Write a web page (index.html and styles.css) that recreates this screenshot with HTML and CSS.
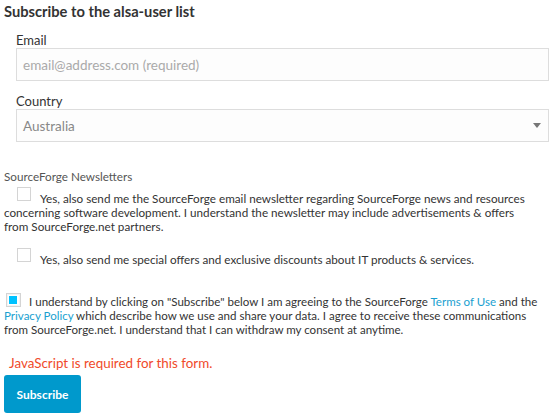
FILE: index.html
```html
<!DOCTYPE html>
<html>
<head>
<meta charset="utf-8">
<link rel="stylesheet" href="styles.css">
</head>
<body>
<form class="form">
  <h1 class="title">Subscribe to the alsa-user list</h1>
  <div class="fields">
    <label class="field-label" for="email">Email</label>
    <input class="text-input" id="email" type="text" placeholder="email@address.com (required)">
    <label class="field-label country-label" for="country">Country</label>
    <div class="select">
      <span class="select-value">Australia</span>
      <span class="select-arrow"></span>
    </div>
  </div>
  <div class="newsletters">
    <div class="group-label">SourceForge Newsletters</div>
    <p class="opt opt-first"><span class="box"></span>Yes, also send me the SourceForge email newsletter regarding SourceForge news and resources concerning software development. I understand the newsletter may include advertisements &amp; offers from SourceForge.net partners.</p>
    <p class="opt opt-second"><span class="box"></span>Yes, also send me special offers and exclusive discounts about IT products &amp; services.</p>
  </div>
  <p class="consent"><span class="box box-checked"></span>I understand by clicking on "Subscribe" below I am agreeing to the SourceForge <a class="link" href="#">Terms of Use</a> and the <a class="link" href="#">Privacy Policy</a> which describe how we use and share your data. I agree to receive these communications from SourceForge.net. I understand that I can withdraw my consent at anytime.</p>
  <p class="js-warning">JavaScript is required for this form.</p>
  <button class="btn" type="button">Subscribe</button>
</form>
</body>
</html>
```
FILE: styles.css
```css
html, body {
  margin: 0;
  padding: 0;
  background: #fff;
}
body {
  font-family: Lato, "Open Sans", sans-serif;
  color: #333;
  width: 549px;
  overflow: hidden;
}
.form {
  padding: 0 0 0 4px;
}
.title {
  font-size: 14.7px;
  font-weight: 700;
  line-height: 22px;
  margin: 0;
  color: #333;
}
.fields {
  display: flex;
  flex-direction: column;
  padding-left: 12px;
  width: 533px;
}
.field-label {
  font-size: 13px;
  line-height: 16px;
  margin-top: 10px;
  color: #333;
}
.country-label {
  margin-top: 12px;
}
.text-input {
  box-sizing: border-box;
  height: 33px;
  width: 100%;
  margin: 0;
  border: 1px solid #ddd;
  background: #fdfdfd;
  font-family: inherit;
  font-size: 13.5px;
  padding: 0 6px;
  color: #555;
  outline: none;
}
.text-input::placeholder {
  color: #aaa;
}
.select {
  box-sizing: border-box;
  height: 33px;
  border: 1px solid #ddd;
  background: #fdfdfd;
  display: flex;
  align-items: center;
  justify-content: space-between;
  padding: 0 6px;
  font-size: 13.5px;
  color: #888;
}
.select-arrow {
  width: 0;
  height: 0;
  border-left: 4px solid transparent;
  border-right: 4px solid transparent;
  border-top: 5px solid #777;
  margin-right: 1px;
}
.newsletters {
  margin-top: 27px;
  padding-right: 13px;
}
.group-label {
  font-size: 11.7px;
  line-height: 15px;
  color: #555;
}
.opt, .consent {
  font-size: 11.7px;
  line-height: 14px;
  margin: 0;
  color: #333;
}
.opt-first {
  margin-top: 3px;
}
.opt-second {
  margin-top: 15px;
}
.box {
  display: inline-block;
  box-sizing: border-box;
  width: 14px;
  height: 14px;
  border: 1px solid #d4d4d4;
  background: #fff;
  vertical-align: 2px;
  margin: 0 9px 0 13px;
  position: relative;
}
.consent {
  font-size: 11.55px;
  margin-top: 27px;
}
.box-checked {
  width: 15px;
  height: 14px;
  margin: 0 8px 0 2px;
  vertical-align: -1px;
  box-shadow: inset 0 0 0 1px #f4f4f4;
}
.box-checked::after {
  content: "";
  position: absolute;
  left: 2px;
  top: 2px;
  width: 8px;
  height: 8px;
  background: #00c2ff;
}
.link {
  color: #1a9fd0;
  text-decoration: none;
}
.js-warning {
  color: #f04a2a;
  font-size: 13.4px;
  line-height: 18px;
  margin: 17px 0 0 5px;
}
.btn {
  display: block;
  margin-top: 3px;
  width: 77px;
  height: 38px;
  border: none;
  border-radius: 3px;
  background: #0099cc;
  color: #fff;
  font-family: inherit;
  font-weight: 700;
  font-size: 12px;
  padding: 0;
}
```
